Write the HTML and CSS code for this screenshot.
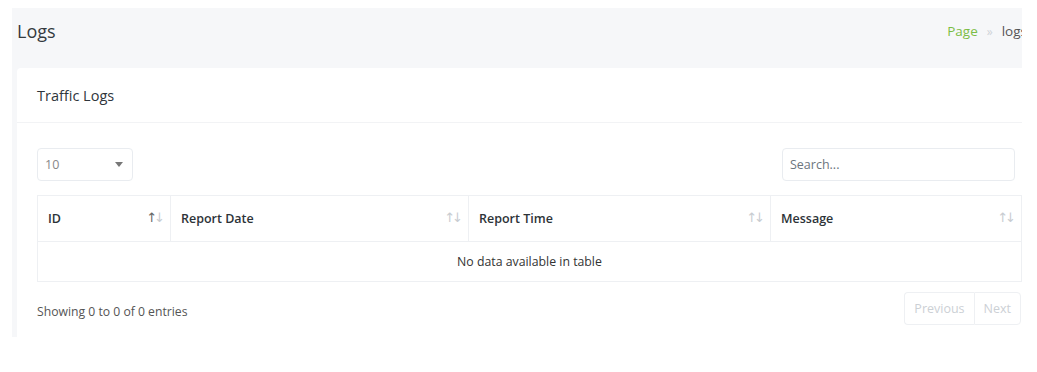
FILE: index.html
```html
<html>
	<head>
		<title>Logs</title>
		<link rel="stylesheet" href="styles.css">
	</head>
	<body>
		<div class="page-frame">
			<div class="page-content">
				<div class="page-title-bar">
					<h4 class="page-title">Logs</h4>
					<div class="breadcrumb">
						<span class="crumb-link">Page</span>
						<span class="crumb-sep">&raquo;</span>
						<span class="crumb-current">logs</span>
					</div>
				</div>

				<div class="card">
					<div class="card-header">Traffic Logs</div>
					<div class="card-body">
						<div class="table-controls">
							<div class="length-select">
								<span>10</span>
								<span class="caret"></span>
							</div>
							<div class="search-box">Search...</div>
						</div>

						<table class="data-table">
							<colgroup>
								<col style="width:133px">
								<col style="width:298px">
								<col style="width:302px">
								<col style="width:251px">
							</colgroup>
							<thead>
								<tr>
									<th><span>ID</span><span class="sort"><b class="on">&uarr;</b><b>&darr;</b></span></th>
									<th><span>Report Date</span><span class="sort"><b>&uarr;</b><b>&darr;</b></span></th>
									<th><span>Report Time</span><span class="sort"><b>&uarr;</b><b>&darr;</b></span></th>
									<th><span>Message</span><span class="sort"><b>&uarr;</b><b>&darr;</b></span></th>
								</tr>
							</thead>
							<tbody>
								<tr>
									<td colspan="4" class="empty-row">No data available in table</td>
								</tr>
							</tbody>
						</table>

						<div class="table-footer">
							<div class="table-info">Showing 0 to 0 of 0 entries</div>
							<div class="pager">
								<span class="pager-btn">Previous</span>
								<span class="pager-btn">Next</span>
							</div>
						</div>
					</div>
				</div>
			</div>
		</div>
	</body>
</html>
```

FILE: styles.css
```css
body {
	margin: 0px;
	background: #ffffff;
	font-family: "Open Sans", "Liberation Sans", sans-serif;
	color: #333;
}
.page-frame {
	margin: 8px 0 0 12px;
	width: 1010px;
	height: 329px;
	overflow: hidden;
	background-color: #f6f7f9;
}
.page-content {
	width: 1024px;
	padding-left: 5px;
}
.page-title-bar {
	display: flex;
	justify-content: space-between;
	align-items: center;
	height: 46px;
	margin-bottom: 14px;
}
.page-title {
	margin: 0;
	font-size: 18px;
	font-weight: 500;
	color: #343a40;
}
.breadcrumb {
	font-size: 13.5px;
	display: flex;
	gap: 9px;
	align-items: center;
	margin-right: 14px;
}
.crumb-link {
	color: #7cbd45;
}
.crumb-sep {
	color: #cfd3d8;
	font-size: 12px;
}
.crumb-current {
	color: #555;
}

.card {
	background: #ffffff;
	border-radius: 4px;
	height: 300px;
}
.card-header {
	height: 55px;
	box-sizing: border-box;
	padding: 18px 20px 0 20px;
	font-size: 14.5px;
	font-weight: 500;
	color: #2f353b;
	border-bottom: 1px solid #f2f3f5;
}
.card-body {
	width: 984px;
	padding: 25px 20px 0 20px;
}
.table-controls {
	display: flex;
	justify-content: space-between;
	align-items: center;
	margin-bottom: 14px;
}
.length-select, .search-box {
	box-sizing: border-box;
	height: 33px;
	border: 1px solid #e9ecf0;
	border-radius: 4px;
	font-size: 12.5px;
	display: flex;
	align-items: center;
}
.length-select {
	width: 96px;
	padding: 0 8px 0 7px;
	justify-content: space-between;
	color: #888;
}
.caret {
	width: 0;
	height: 0;
	border-left: 4px solid transparent;
	border-right: 4px solid transparent;
	border-top: 5px solid #777;
	margin-right: 1px;
}
.search-box {
	width: 233px;
	margin-right: 6px;
	padding-left: 7px;
	color: #6c757d;
}

.data-table {
	width: 984px;
	table-layout: fixed;
	border-collapse: collapse;
	font-size: 12.5px;
}
.data-table th {
	height: 46px;
	padding: 0 5px 0 10px;
	text-align: left;
	font-weight: 600;
	color: #2d3338;
	border: 1px solid #eef0f3;
}
.data-table th span:first-child {
	float: left;
}
.sort {
	float: right;
	font-family: "DejaVu Sans", sans-serif;
	font-size: 13px;
	color: #c8ccd1;
	letter-spacing: -3px;
	padding-right: 3px;
}
.sort b {
	font-weight: 400;
}
.sort .on {
	color: #666;
}
.empty-row {
	height: 40px;
	text-align: center;
	color: #333;
	font-size: 12.3px;
	border: 1px solid #eef0f3;
}

.table-footer {
	display: flex;
	justify-content: space-between;
	align-items: center;
	margin-top: 10px;
}
.table-info {
	font-size: 12.2px;
	color: #555;
	padding-top: 5px;
}
.pager {
	display: flex;
}
.pager-btn {
	box-sizing: border-box;
	height: 33px;
	padding: 0 9px;
	display: flex;
	align-items: center;
	font-size: 12.5px;
	color: #ccd0d5;
	border: 1px solid #eef0f3;
}
.pager-btn:first-child {
	border-radius: 4px 0 0 4px;
	border-right: none;
}
.pager-btn:last-child {
	border-radius: 0 4px 4px 0;
}
```
